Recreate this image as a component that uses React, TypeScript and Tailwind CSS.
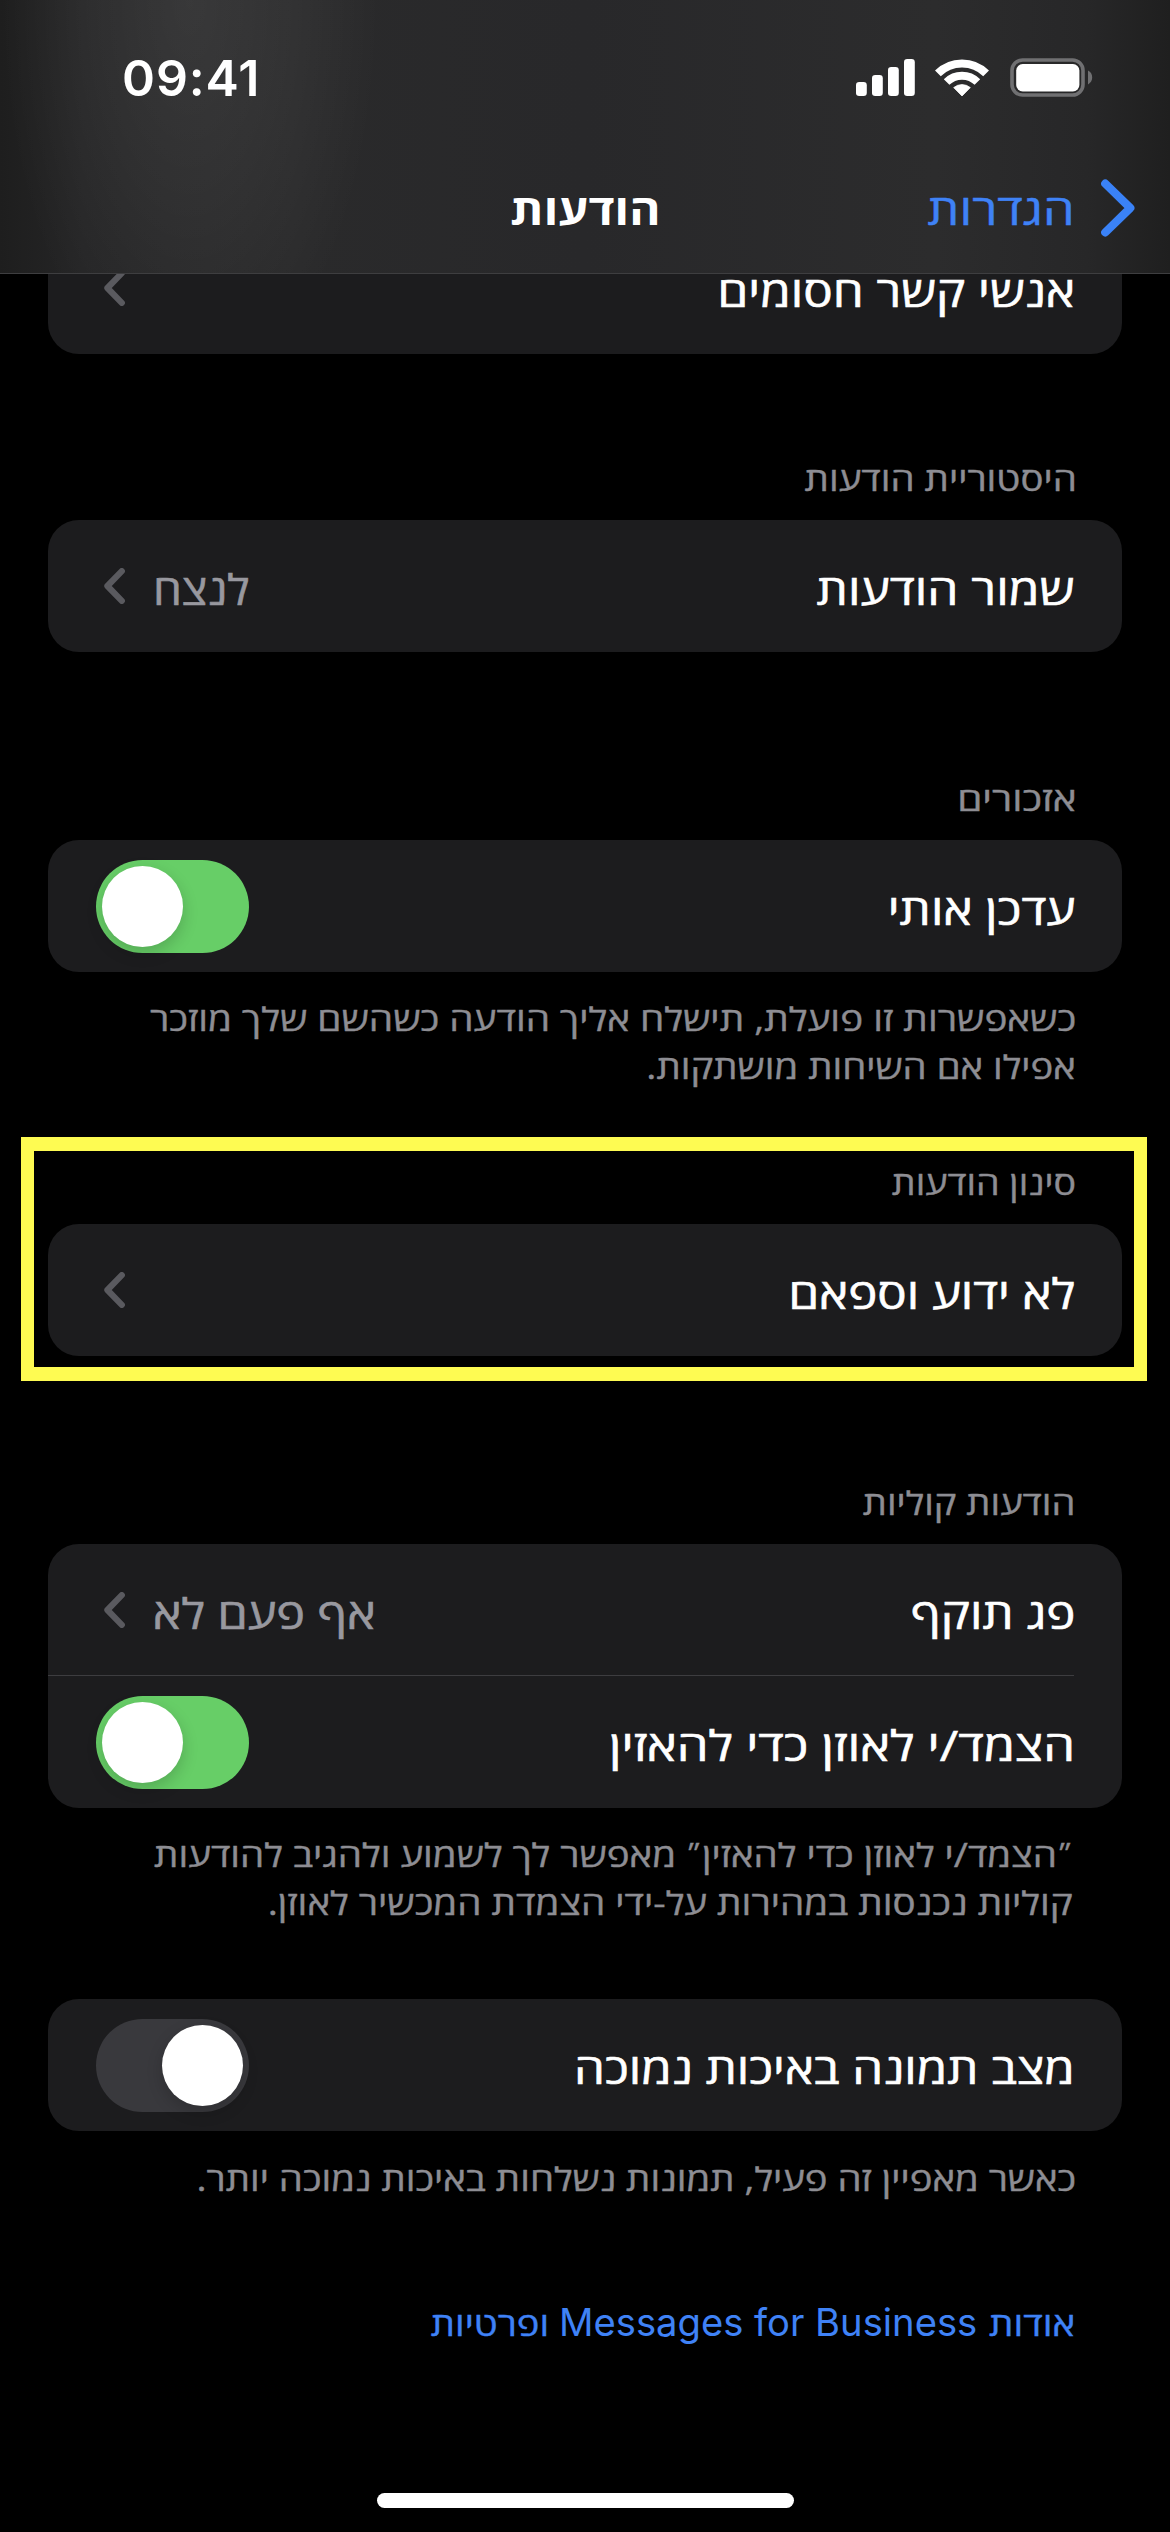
import type { ReactNode } from "react";

function Stretch({ className, children }: { className: string; children: ReactNode }) {
  return <span className={`inline-block whitespace-nowrap ${className}`}>{children}</span>;
}

function SectionHeader({ className, scale, children }: { className: string; scale: string; children: ReactNode }) {
  return (
    <h2 className={`mb-[18px] h-12 text-[32.3px] leading-[48px] text-[#8d8d93] [-webkit-text-stroke:0.4px] ${className}`}>
      <Stretch className={`origin-right ${scale}`}>{children}</Stretch>
    </h2>
  );
}

function Footer({ className, lines }: { className: string; lines: { text: ReactNode; scale: string }[] }) {
  return (
    <div className={`flex flex-col items-start text-[32.3px] leading-[48px] text-[#8d8d93] [-webkit-text-stroke:0.4px] ${className}`}>
      {lines.map((l, i) => (
        <Stretch key={i} className={`h-12 origin-right ${l.scale}`}>
          {l.text}
        </Stretch>
      ))}
    </div>
  );
}

function Gershayim() {
  return <span className="relative -top-[6px] text-[22px] leading-none">״</span>;
}

function Card({ className = "", children }: { className?: string; children: ReactNode }) {
  return <div className={`mx-12 rounded-[31px] bg-[#1c1c1e] ${className}`}>{children}</div>;
}

function Row({ label, scale, children }: { label: string; scale: string; children?: ReactNode }) {
  return (
    <div className="flex h-[132px] items-center justify-between ps-[47px] text-[42.2px] leading-[60px] text-white [-webkit-text-stroke:0.6px]">
      <Stretch className={`origin-right pt-[5px] ${scale}`}>{label}</Stretch>
      {children}
    </div>
  );
}

function Disclosure({ value, scale = "" }: { value?: string; scale?: string }) {
  return (
    <div className="me-[56px] flex items-center gap-[28px]">
      {value && <Stretch className={`origin-left pt-[5px] text-[#98989f] ${scale}`}>{value}</Stretch>}
      <svg width="21" height="36" viewBox="0 0 21 36" fill="none" className="shrink-0">
        <path d="M17.8 3.2 L3.4 18 L17.8 32.8" stroke="#5a5a5f" strokeWidth="6.2" strokeLinecap="round" strokeLinejoin="round" />
      </svg>
    </div>
  );
}

function Toggle({ on }: { on: boolean }) {
  return (
    <div
      dir="ltr"
      className={`mt-px ml-[48px] flex h-[93px] w-[153px] items-center rounded-full px-1.5 ${
        on ? "justify-start bg-[#67ce67]" : "justify-end bg-[#39393d]"
      }`}
    >
      <div className="size-[81px] rounded-full bg-white shadow-[0_6px_16px_rgba(0,0,0,0.18)]" />
    </div>
  );
}

function StatusIcons() {
  return (
    <svg width="242" height="42" viewBox="0 0 242 42" fill="none">
      <g fill="#fff">
        <rect x="3" y="25" width="10.8" height="14" rx="3.2" />
        <rect x="19" y="18" width="10.8" height="21" rx="3.2" />
        <rect x="35" y="10" width="10.8" height="29" rx="3.2" />
        <rect x="51" y="2" width="10.8" height="37" rx="3.2" />
        <path d="M109 39 L100.7 30.6 A13 13 0 0 1 117.3 30.6 Z" stroke="#fff" strokeWidth="0.8" strokeLinejoin="round" />
      </g>
      <path d="M84.9 16.4 A34.3 34.3 0 0 1 133.1 16.4" stroke="#fff" strokeWidth="8.2" />
      <path d="M93.6 25 A22 22 0 0 1 124.4 25" stroke="#fff" strokeWidth="8" />
      <rect x="159" y="3" width="71" height="35" rx="10.5" stroke="#707072" strokeWidth="3.6" />
      <rect x="163.2" y="7" width="63.2" height="27.5" rx="6.5" fill="#fff" />
      <path d="M235 13.6 C240.6 16 240.6 25 235 27.4 Z" fill="#707072" />
    </svg>
  );
}

export default function App() {
  return (
    <div
      dir="rtl"
      lang="he"
      className="relative flex h-[2532px] w-[1170px] flex-col overflow-hidden bg-black font-['Open_Sans',sans-serif]"
    >
      <header className="relative z-10 h-[274px] shrink-0 border-b border-[#3e3e40] bg-[radial-gradient(ellipse_190px_400px_at_190px_0px,rgba(255,255,255,0.08),rgba(255,255,255,0.045)_50%,transparent),linear-gradient(to_right,#1e1e1e,#252526_7%,#2a2a2b_25%,#28282a_50%,#2c2c2d_80%,#272728_93%,#1f1f1f)]">
        <div dir="ltr" className="flex h-[156px] items-center justify-between ps-[122px] pe-[75px]">
          <span className="font-['Inter',sans-serif] text-[50px] leading-[60px] font-semibold tracking-[0.9px] text-white">09:41</span>
          <StatusIcons />
        </div>
        <nav className="grid h-[104px] grid-cols-[1fr_auto_1fr] items-center text-[42.2px] leading-[60px]">
          <a className="flex items-center text-[#3f82f6] [-webkit-text-stroke:0.5px]">
            <svg width="34" height="58" viewBox="0 0 34 58" fill="none" className="ms-[35px] me-[27px] shrink-0">
              <path d="M4.3 4.6 L29.3 29 L4.3 53.4" stroke="#3a82f7" strokeWidth="8.2" strokeLinecap="round" strokeLinejoin="round" />
            </svg>
            <Stretch className="origin-right scale-x-[1.19] pt-[2px]">הגדרות</Stretch>
          </a>
          <h1 className="font-bold text-white">
            <Stretch className="scale-x-[1.13] pt-[2px]">הודעות</Stretch>
          </h1>
        </nav>
      </header>

      <main className="flex flex-col">
        <Card className="-mt-[52px]">
          <Row label="אנשי קשר חסומים" scale="scale-x-[1.168]">
            <Disclosure />
          </Row>
        </Card>

        <SectionHeader className="mt-[100px] ps-[93px]" scale="scale-x-[1.19]">היסטוריית הודעות</SectionHeader>
        <Card>
          <Row label="שמור הודעות" scale="scale-x-[1.175]">
            <Disclosure value="לנצח" scale="scale-x-[1.09]" />
          </Row>
        </Card>

        <SectionHeader className="mt-[122px] ps-[94px]" scale="scale-x-[1.25]">אזכורים</SectionHeader>
        <Card>
          <Row label="עדכן אותי" scale="scale-x-[1.17]">
            <Toggle on />
          </Row>
        </Card>
        <Footer
          className="mt-[22px] ps-[94px]"
          lines={[
            { text: "כשאפשרות זו פועלת, תישלח אליך הודעה כשהשם שלך מוזכר", scale: "scale-x-[1.198]" },
            { text: "אפילו אם השיחות מושתקות.", scale: "scale-x-[1.187]" },
          ]}
        />

        <section className="relative mt-[68px]">
          <SectionHeader className="ps-[94px]" scale="scale-x-[1.166]">סינון הודעות</SectionHeader>
          <Card>
            <Row label="לא ידוע וספאם" scale="scale-x-[1.164]">
              <Disclosure />
            </Row>
          </Card>
          <div className="pointer-events-none absolute -top-[21px] right-[23.5px] -bottom-[25px] left-[21px] border-x-[13.5px] border-y-[14px] border-[#fefb52]" />
        </section>

        <SectionHeader className="mt-[122px] ps-[95px]" scale="scale-x-[1.179]">הודעות קוליות</SectionHeader>
        <Card>
          <Row label="פג תוקף" scale="scale-x-[1.164]">
            <Disclosure value="אף פעם לא" scale="scale-x-[1.148]" />
          </Row>
          <div className="ms-12 -mt-px h-px bg-[#3d3d40]" />
          <Row label="הצמד/י לאוזן כדי להאזין" scale="scale-x-[1.198]">
            <Toggle on />
          </Row>
        </Card>
        <Footer
          className="mt-[22px] ps-[97px]"
          lines={[
            {
              text: (
                <>
                  <Gershayim />
                  הצמד/י לאוזן כדי להאזין
                  <Gershayim /> מאפשר לך לשמוע ולהגיב להודעות
                </>
              ),
              scale: "scale-x-[1.192]",
            },
            { text: "קוליות נכנסות במהירות על-ידי הצמדת המכשיר לאוזן.", scale: "scale-x-[1.195]" },
          ]}
        />

        <Card className="mt-[73px]">
          <Row label="מצב תמונה באיכות נמוכה" scale="scale-x-[1.165]">
            <Toggle on={false} />
          </Row>
        </Card>
        <Footer
          className="mt-[23px] ps-[94px]"
          lines={[{ text: "כאשר מאפיין זה פעיל, תמונות נשלחות באיכות נמוכה יותר.", scale: "scale-x-[1.187]" }]}
        />

        <a className="mt-[96px] flex items-baseline ps-[95px] text-[32.3px] leading-[48px] text-[#3f82f6]">
          <span className="w-[98px] [-webkit-text-stroke:0.4px]">
            <Stretch className="origin-right scale-x-[1.194]">אודות</Stretch>
          </span>
          <span dir="ltr" className="w-[418px] text-center font-['Inter',sans-serif] text-[38.2px] whitespace-nowrap">
            Messages for Business
          </span>
          <span className="ps-[10px] [-webkit-text-stroke:0.4px]">
            <Stretch className="origin-right scale-x-[1.182]">ופרטיות</Stretch>
          </span>
        </a>
      </main>

      <div className="absolute bottom-6 left-[377px] h-[15px] w-[417px] rounded-full bg-white" />
    </div>
  );
}
